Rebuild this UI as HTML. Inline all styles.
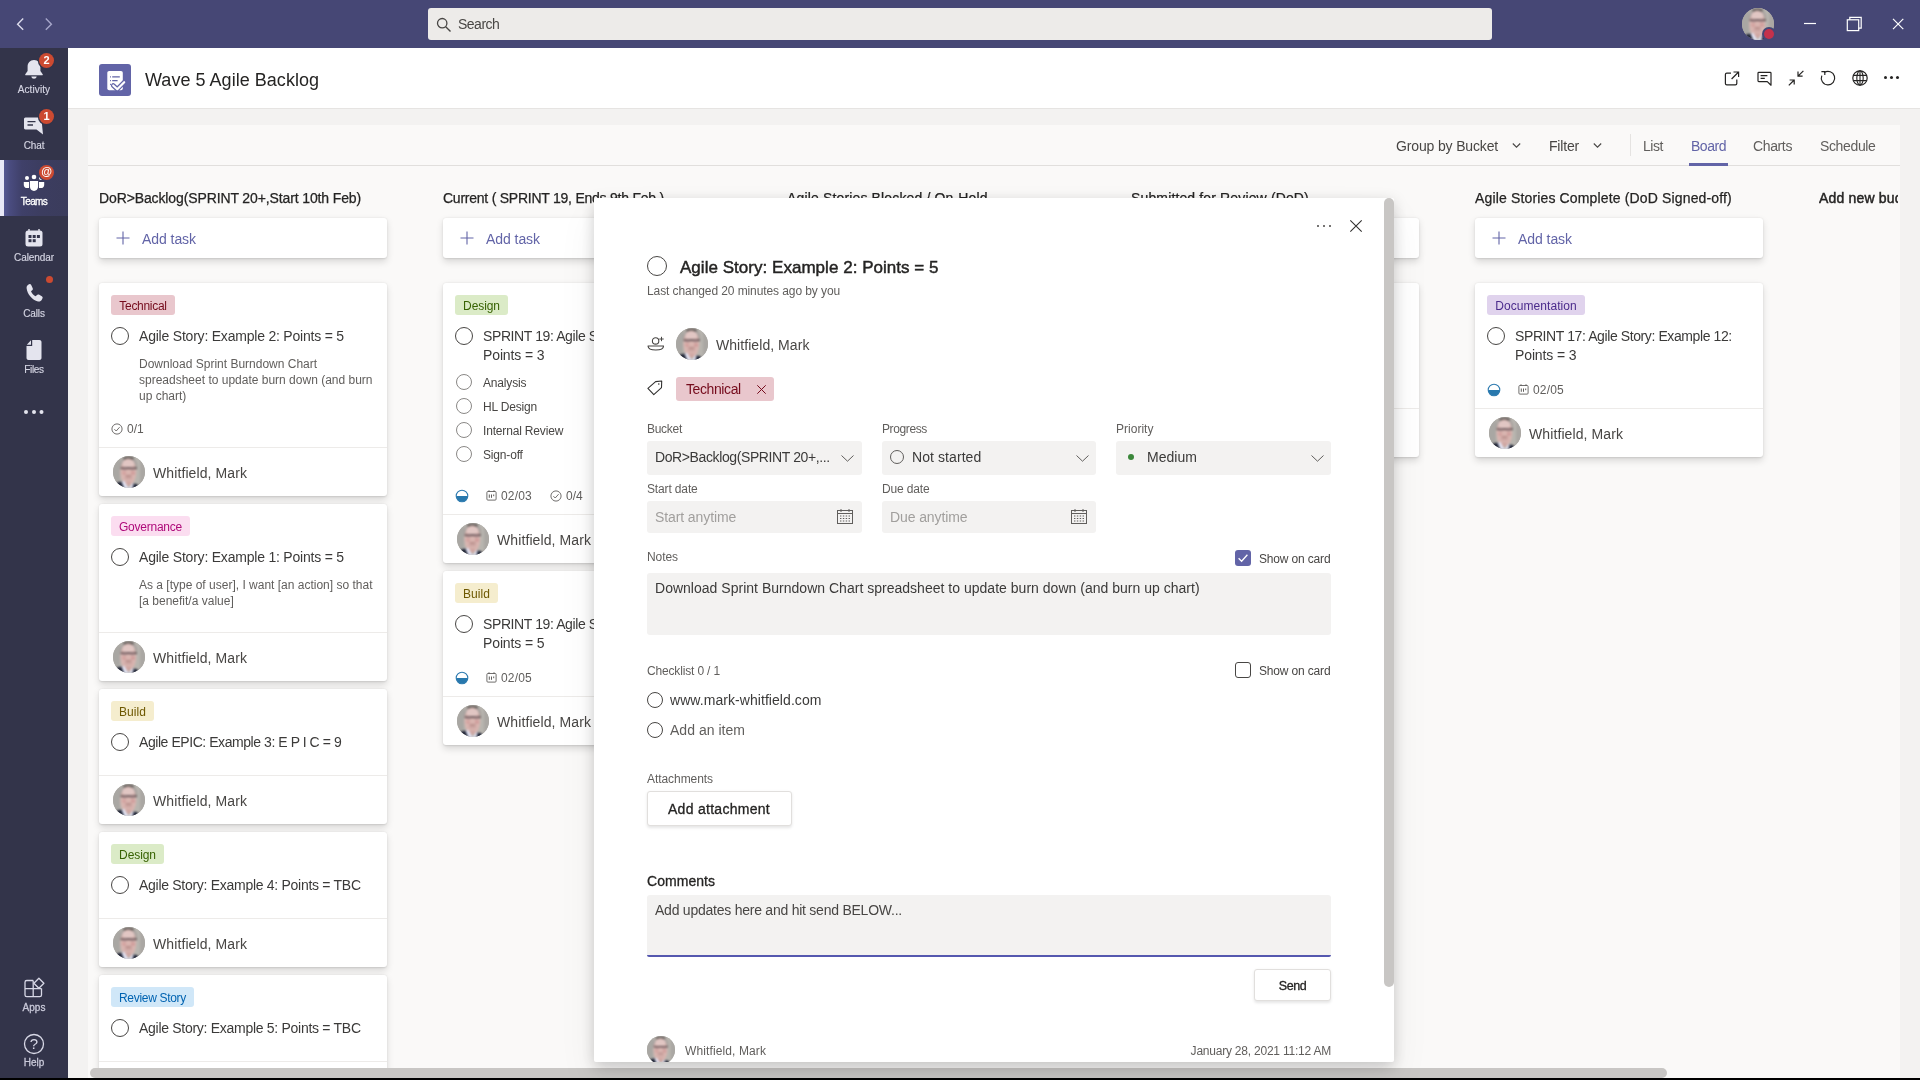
<!DOCTYPE html>
<html lang="en">
<head>
<meta charset="utf-8">
<title>Wave 5 Agile Backlog</title>
<style>
*{box-sizing:border-box;margin:0;padding:0}
html,body{width:1920px;height:1080px;overflow:hidden;background:#f3f2f1;font-family:"Liberation Sans",sans-serif;color:#252423}
body{position:relative}
#titlebar,#rail,#header,#panel,#modal{will-change:transform}
.abs{position:absolute}
svg{display:block;overflow:visible}
/* title bar */
#titlebar{position:absolute;left:0;top:0;width:1920px;height:48px;background:#464775}
#search{position:absolute;left:428px;top:8px;width:1064px;height:32px;background:#edebe9;border-radius:3px}
#search span{position:absolute;left:30px;letter-spacing:-0.500px;top:7px;font-size:14px;line-height:18px;color:#484644}
/* rail */
#rail{position:absolute;left:0;top:48px;width:68px;height:1032px;background:#33344a}
.ri{position:absolute;left:0;width:68px;height:56px}
.ri .lbl{position:absolute;left:0;width:68px;text-align:center;top:35px;font-size:10px;line-height:12px;color:#d6d6e4;letter-spacing:-0.100px;-webkit-text-stroke:0.150px #d6d6e4}
.ri svg{position:absolute;left:22px;top:8px}
.ri.act{background:linear-gradient(90deg,#5d60a0 0,#4a4c80 14%,#3f4069 32%,#3c3d60 60%,#3b3c5c 100%)}
.ri.act:before{content:"";position:absolute;left:0;top:0;width:4px;height:56px;background:#e8e8f7}
.ri.act .lbl{color:#fff}
.badge{position:absolute;left:39px;top:4px;width:16px;height:16px;border-radius:8px;background:#cc4a31;color:#fff;font-size:11px;font-weight:bold;line-height:16px;text-align:center}
/* header */
#header{position:absolute;left:68px;top:48px;width:1852px;height:61px;background:#fff;border-bottom:1px solid #e6e4e2}
#appicon{position:absolute;left:31px;top:16px;width:32px;height:32px;border-radius:3px;background:#6264a7}
#title{position:absolute;left:77px;top:20px;letter-spacing:0.030px;font-size:18px;line-height:24px;color:#252423;white-space:nowrap}
.hicon{position:absolute;top:22px}
/* panel */
#panel{position:absolute;left:88px;top:125px;width:1812px;height:953px;background:#faf9f8;overflow:hidden}
#toolbar{position:absolute;left:0;top:0;width:1812px;height:41px;border-bottom:1px solid #e1dfdd}
.tb{position:absolute;top:11px;font-size:14px;line-height:20px;color:#484644;white-space:nowrap}

.av{position:absolute;width:32px;height:32px;border-radius:50%;overflow:hidden;background:#b3b0ab}
.av svg{width:100%;height:100%;filter:blur(0.800px)}
.av.s28{width:28px;height:28px}

/* board */
.colh{position:absolute;top:63px;font-size:14px;line-height:20px;color:#252423;white-space:nowrap;-webkit-text-stroke:0.25px #252423}
.card{position:absolute;width:288px;background:#fff;border-radius:3px;box-shadow:0 3.200px 7.200px rgba(0,0,0,.13),0 .6px 1.800px rgba(0,0,0,.1)}
.addtask{height:40px;top:93px}
.addtask span{position:absolute;left:43px;top:11px;font-size:14px;letter-spacing:-0.060px;line-height:20px;color:#6264a7}
.addtask svg{position:absolute;left:17px;top:13px}
.tag{position:absolute;left:12px;top:12px;height:20px;border-radius:3px;font-size:12px;line-height:22.500px;padding:0;text-align:center;white-space:nowrap;overflow:hidden}
.t-tech{background:#e9c7cd;color:#750b1c}
.t-gov{background:#fbddf0;color:#af0a7a}
.t-build{background:#f5edce;color:#6d5700}
.t-design{background:#dbebc7;color:#386304}
.t-review{background:#d0e7f8;color:#0063b1}
.t-doc{background:#e0d3ed;color:#4b2b8c}
.circ{position:absolute;border:1.300px solid #484644;border-radius:50%;background:#fff}
.c17{width:18px;height:18px;left:12px}
.ttl{position:absolute;left:40px;font-size:14px;line-height:19px;color:#3b3a39;margin-top:1px;white-space:nowrap}
.desc{position:absolute;left:40px;font-size:12px;line-height:16px;color:#605e5c;white-space:nowrap}
.divd{position:absolute;left:0;width:288px;height:1px;background:#edebe9}
.nm{position:absolute;left:54px;font-size:14px;letter-spacing:0.100px;line-height:20px;color:#484644;white-space:nowrap}
.meta{position:absolute;font-size:12px;line-height:16px;color:#605e5c;white-space:nowrap}
.chk{position:absolute;left:40px;font-size:12px;line-height:16px;color:#484644;white-space:nowrap;letter-spacing:-0.170px;margin-top:1px}
.c15{width:16px;height:16px;left:13px;border-color:#8a8886;border-width:1.200px}
#blackbar{position:absolute;left:0;top:1078px;width:1920px;height:2px;background:#000}
/* modal */
#modal{position:absolute;left:594px;top:198px;width:800px;height:864px;background:#fff;border-radius:2px;box-shadow:0 4.800px 14.400px rgba(0,0,0,.18),0 18px 40px rgba(0,0,0,.06);z-index:10}
#minner{position:absolute;left:0;top:0;width:800px;height:864px;overflow:hidden;border-radius:2px}
.m{position:absolute;white-space:nowrap}
.l12{font-size:12px;line-height:16px;color:#605e5c}
.t14{font-size:14px;line-height:20px;color:#3b3a39}
.fld{position:absolute;background:#f3f2f1;border-radius:3px}
.sb{-webkit-text-stroke:0.300px currentColor}
</style>
</head>
<body>
<div id="titlebar">
  <svg class="abs" style="left:15px;top:17px" width="10" height="14" viewBox="0 0 10 14"><path d="M8.200 1.600 L2.600 7.200 L8.200 12.800" fill="none" stroke="#dcdcec" stroke-width="1.400"/></svg>
  <svg class="abs" style="left:44px;top:17px" width="10" height="14" viewBox="0 0 10 14"><path d="M1.800 1.600 L7.400 7.200 L1.800 12.800" fill="none" stroke="#a7a7ca" stroke-width="1.400"/></svg>
  <div id="search">
    <svg class="abs" style="left:8px;top:9px" width="16" height="16" viewBox="0 0 16 16"><circle cx="6.2" cy="6.2" r="4.7" fill="none" stroke="#484644" stroke-width="1.3"/><path d="M9.7 9.7 L14.5 14.5" stroke="#484644" stroke-width="1.4"/></svg>
    <span>Search</span>
  </div>

  <div class="av" style="left:1742px;top:8px"><svg viewBox="0 0 32 32"><g><rect x="-2" y="-2" width="36" height="36" fill="#b8b5af"/><rect x="-2" y="-2" width="9" height="36" fill="#a9a7a3"/><rect x="27" y="-2" width="7" height="36" fill="#aaa7a3"/><ellipse cx="15.500" cy="9.500" rx="8.800" ry="9" fill="#a59f9c"/><ellipse cx="15.500" cy="2.200" rx="5.500" ry="1.600" fill="#5f5856"/><ellipse cx="15.300" cy="16" rx="8" ry="13.400" fill="#d9b5b0"/><ellipse cx="15.300" cy="7.500" rx="6.200" ry="4.300" fill="#e1c6c3"/><ellipse cx="11.200" cy="17" rx="2.200" ry="2" fill="#d3a3a0"/><ellipse cx="19.900" cy="17" rx="2.200" ry="2" fill="#d09d9b"/><rect x="7.600" y="11.600" width="16.400" height="1.200" rx="0.500" fill="#33272c"/><ellipse cx="11.500" cy="13" rx="2.600" ry="1" fill="#947a7c"/><ellipse cx="19.600" cy="13" rx="2.600" ry="1" fill="#947a7c"/><ellipse cx="15.500" cy="19.900" rx="3.400" ry="0.800" fill="#b58a87"/><ellipse cx="15.500" cy="22.300" rx="4" ry="1.200" fill="#cba4a0"/><path d="M8.400 25.800 L11.500 25 L14.800 31.500 L16.600 31.500 L19.600 27 L20.800 28 L20 33 L10 33 Z" fill="#e3e5f6"/><path d="M11.800 25.500 L19 25.500 L15.600 30.500 Z" fill="#cfa6a1"/><path d="M3 27 L8.400 25.400 L11.500 33 L3 33 Z" fill="#1c2133"/><path d="M20.600 27.600 L24.800 28.400 L26 33 L19.400 33 Z" fill="#1c2133"/></g></svg></div>
  <div class="abs" style="left:1762px;top:27px;width:14px;height:14px;border-radius:7px;background:#464775"></div>
  <div class="abs" style="left:1764px;top:29px;width:10px;height:10px;border-radius:5px;background:#c4314b"></div>
  <svg class="abs" style="left:1800px;top:12px" width="24" height="24" viewBox="0 0 24 24"><path d="M4 11.500 H16" stroke="#fff" stroke-width="1.200"/></svg>
  <svg class="abs" style="left:1842px;top:12px" width="24" height="24" viewBox="0 0 24 24"><rect x="5.300" y="7.800" width="11.400" height="10.800" fill="none" stroke="#fff" stroke-width="1.200"/><path d="M7.800 7.800 V5.300 H19.200 V16.100 H16.700" fill="none" stroke="#fff" stroke-width="1.200"/></svg>
  <svg class="abs" style="left:1886px;top:12px" width="24" height="24" viewBox="0 0 24 24"><path d="M7 6.800 L17.300 17.100 M17.300 6.800 L7 17.100" stroke="#fff" stroke-width="1.200"/></svg>
</div>
<div id="rail">
  <div class="ri" style="top:0">
    <svg width="24" height="24" viewBox="0 0 24 24" style="left:22px;top:10px"><path d="M12 2 C8 2 5.6 5 5.6 8.6 V13 L3.3 16.2 C3 16.8 3.3 17.3 4 17.3 H20 C20.7 17.3 21 16.8 20.7 16.2 L18.4 13 V8.6 C18.4 5 16 2 12 2 Z" fill="#e4e4ee"/><path d="M9.3 18.6 H14.7 C14.4 20 13.3 20.8 12 20.8 C10.7 20.8 9.6 20 9.3 18.6 Z" fill="#e4e4ee"/></svg>
    <div class="badge" style="left:39px;top:4.500px;width:15px;height:15px;border-radius:8px;line-height:15px;box-shadow:0 0 0 1.200px #33344a">2</div>
    <div class="lbl" style="top:36px;letter-spacing:0.100px">Activity</div>
  </div>
  <div class="ri" style="top:56px">
    <svg width="24" height="24" viewBox="0 0 24 24" style="left:22px;top:11px"><path d="M3.5 2.5 H17.5 C18.6 2.5 19.5 3.4 19.5 4.5 L21 19.5 L14.5 14.5 H3.5 C2.4 14.5 2 13.8 2 12.8 V4.3 C2 3.3 2.6 2.5 3.5 2.5 Z" fill="#e4e4ee"/><path d="M5.5 6.6 H13.5 M5.5 10 H11" stroke="#33344a" stroke-width="1.3"/></svg>
    <div class="badge" style="left:39px;top:4.500px;width:15px;height:15px;border-radius:8px;line-height:15px;box-shadow:0 0 0 1.200px #33344a">1</div>
    <div class="lbl" style="top:36px">Chat</div>
  </div>
  <div class="ri act" style="top:112px">
    <svg width="24" height="20" viewBox="0 0 24 20" style="left:22px;top:14px"><circle cx="5" cy="4" r="2" fill="#fff"/><circle cx="12" cy="3" r="2.300" fill="#fff"/><circle cx="19" cy="4" r="2" fill="#fff"/><path d="M1.800 7.900 H7 V14.100 H5 C3.200 14.100 1.800 12.700 1.800 10.900 Z" fill="#fff"/><path d="M7.900 6.900 H16.100 V12.800 C16.100 15.100 14.300 16.900 12 16.900 C9.700 16.900 7.900 15.100 7.900 12.800 Z" fill="#fff"/><path d="M17 7.900 H22.200 V10.900 C22.200 12.700 20.800 14.100 19 14.100 H17 Z" fill="#fff"/></svg>
    <div class="badge" style="left:39px;top:4.500px;width:15px;height:15px;border-radius:8px;line-height:13.500px;font-size:11px;box-shadow:0 0 0 1.200px #3d3e64">@</div>
    <div class="lbl" style="top:35.500px;-webkit-text-stroke:0.300px #fff;letter-spacing:-0.600px">Teams</div>
  </div>
  <div class="ri" style="top:168px">
    <svg width="20" height="20" viewBox="0 0 20 20" style="left:24px;top:12px"><path d="M5 1 V3 M15 1 V3" stroke="#e4e4ee" stroke-width="1.4"/><rect x="1.5" y="2.5" width="17" height="16" rx="2.5" fill="#e4e4ee"/><rect x="4.5" y="7" width="3" height="3" fill="#33344a"/><rect x="8.7" y="7" width="3" height="3" fill="#33344a"/><rect x="12.9" y="7" width="3" height="3" fill="#33344a"/><rect x="4.5" y="11.2" width="3" height="3" fill="#33344a"/><rect x="8.7" y="11.2" width="3" height="3" fill="#33344a"/></svg>
    <div class="lbl" style="top:36px">Calendar</div>
  </div>
  <div class="ri" style="top:224px">
    <svg width="20" height="20" viewBox="0 0 20 20" style="left:24px;top:11px"><path d="M5.2 1.2 C6 0.9 6.8 1.2 7.2 2 L8.7 5.2 C9 6 8.8 6.8 8.2 7.3 L7 8.3 C7.8 10.4 9.6 12.4 11.8 13.3 L12.9 12 C13.4 11.4 14.2 11.2 14.9 11.6 L17.8 13.2 C18.6 13.7 18.9 14.5 18.5 15.3 L17.8 16.8 C17.1 18.2 15.6 18.9 14 18.5 C8.3 17 3.3 11.2 2.6 5.2 C2.4 3.6 3.2 2.3 4.5 1.6 Z" fill="#e4e4ee"/></svg>
    <div class="abs" style="left:46px;top:4px;width:7px;height:7px;border-radius:4px;background:#cc4a31"></div>
    <div class="lbl" style="top:36px">Calls</div>
  </div>
  <div class="ri" style="top:280px">
    <svg width="20" height="22" viewBox="0 0 20 22" style="left:24px;top:11px"><path d="M8.2 1 H15.5 C16.6 1 17.5 1.9 17.5 3 V19 C17.5 20.1 16.6 21 15.5 21 H4.5 C3.4 21 2.5 20.1 2.5 19 V7 H8.2 Z M7 1.3 V5.8 H2.8 Z" fill="#e4e4ee"/></svg>
    <div class="lbl" style="top:36px;letter-spacing:-0.300px">Files</div>
  </div>
  <div class="abs" style="left:24px;top:362px;width:4px;height:4px;border-radius:2px;background:#e4e4ee;box-shadow:8px 0 0 #e4e4ee,15.5px 0 0 #e4e4ee"></div>
  <div class="ri" style="top:921px">
    <svg width="22" height="22" viewBox="0 0 22 22" style="left:23px;top:7px"><path d="M10.200 4.500 H3.800 C2.800 4.500 2 5.300 2 6.300 V18.900 C2 19.900 2.800 20.700 3.800 20.700 H16.700 C17.700 20.700 18.500 19.900 18.500 18.900 V12.600 M2 12.600 H18.500 M10.200 4.500 V20.700" fill="none" stroke="#d8d8e6" stroke-width="1.300"/><path d="M15.900 2.300 L20.900 7.300 L15.900 12.300 L10.900 7.300 Z" fill="none" stroke="#d8d8e6" stroke-width="1.300" stroke-linejoin="round"/></svg>
    <div class="lbl" style="top:33px;-webkit-text-stroke:0.300px #c8c8d8;color:#c8c8d8;letter-spacing:0">Apps</div>
  </div>
  <div class="ri" style="top:976px">
    <svg width="22" height="22" viewBox="0 0 22 22" style="left:23px;top:9px"><circle cx="11" cy="11" r="9.500" fill="none" stroke="#d8d8e6" stroke-width="1.3"/></svg>
    <div class="abs" style="left:23px;top:10px;width:22px;text-align:center;font-size:15px;line-height:20px;color:#d8d8e6">?</div>
    <div class="lbl" style="top:33px;-webkit-text-stroke:0.300px #c8c8d8;color:#c8c8d8;letter-spacing:0">Help</div>
  </div>
</div>
<div id="header">
  <div id="appicon"><svg width="32" height="32" viewBox="0 0 32 32"><rect x="8.300" y="7" width="15.500" height="19.200" rx="1.800" fill="#fff"/><path d="M11 12.800 H11.900 M13.200 12.800 H20.800 M11 16.600 H11.900 M13.200 16.600 H18.600 M11 20.400 H11.900" stroke="#6264a7" stroke-width="1.300"/><path d="M14.200 21.500 L18.300 25.200 L25.200 18.200" fill="none" stroke="#6264a7" stroke-width="4.600" stroke-linecap="round" stroke-linejoin="round"/><path d="M14.200 21.500 L18.300 25.200 L25.200 18.200" fill="none" stroke="#fff" stroke-width="2.200" stroke-linecap="round" stroke-linejoin="round"/></svg></div>
  <div id="title">Wave 5 Agile Backlog</div>
  <svg class="hicon" style="left:1655px" width="16" height="16" viewBox="0 0 16 16"><path d="M8 3.200 H3.800 C3 3.200 2.400 3.800 2.400 4.600 V13.400 C2.400 14.200 3 14.800 3.800 14.800 H12.400 C13.200 14.800 13.800 14.200 13.800 13.400 V9.500" fill="none" stroke="#252423" stroke-width="1.200"/><path d="M8.600 9 L15.600 2 M10.500 2 H15.600 V7" fill="none" stroke="#252423" stroke-width="1.200"/></svg>
  <svg class="hicon" style="left:1688px" width="16" height="16" viewBox="0 0 16 16"><path d="M2.800 2.400 H14.200 C14.600 2.400 15 2.800 15 3.200 V15.200 L11.300 11.600 H2.800 C2.400 11.600 2 11.200 2 10.800 V3.200 C2 2.800 2.400 2.400 2.800 2.400 Z" fill="none" stroke="#252423" stroke-width="1.200" stroke-linejoin="round"/><path d="M4.600 5.600 H11.400 M4.600 8.400 H8.800" stroke="#252423" stroke-width="1.200"/></svg>
  <svg class="hicon" style="left:1719px;top:21px" width="18" height="18" viewBox="0 0 18 18"><path d="M16.400 1.800 L11 7.200 M11 2.600 V7.200 H15.600 M1.800 16.400 L7.200 11 M2.600 11 H7.200 V15.600" fill="none" stroke="#252423" stroke-width="1.200"/></svg>
  <svg class="hicon" style="left:1751px;top:21px" width="18" height="18" viewBox="0 0 18 18"><path d="M5.200 3.600 A6.700 6.700 0 1 1 2.800 6.600" fill="none" stroke="#252423" stroke-width="1.200"/><path d="M2.400 2.600 H5.800 V6" fill="none" stroke="#252423" stroke-width="1.200"/></svg>
  <svg class="hicon" style="left:1783px;top:21px" width="18" height="18" viewBox="0 0 18 18"><circle cx="9" cy="9" r="7.200" fill="none" stroke="#252423" stroke-width="1.200"/><ellipse cx="9" cy="9" rx="3.200" ry="7.200" fill="none" stroke="#252423" stroke-width="1.100"/><path d="M9 1.800 V16.200 M2.400 6.400 H15.600 M2.400 11.600 H15.600" stroke="#252423" stroke-width="1.100"/></svg>
  <div class="abs" style="left:1816px;top:28px;width:3px;height:3px;border-radius:2px;background:#252423;box-shadow:6px 0 0 #252423,12px 0 0 #252423"></div>
</div>
<div id="panel">
  <div id="toolbar">
    <div class="tb" style="left:1308px;letter-spacing:-0.150px">Group by Bucket</div>
    <svg class="abs" style="left:1424px;top:17px" width="9" height="7" viewBox="0 0 9 7"><path d="M0.800 1.500 L4.500 5.200 L8.200 1.500" fill="none" stroke="#484644" stroke-width="1.100"/></svg>
    <div class="tb" style="left:1461px;letter-spacing:-0.180px">Filter</div>
    <svg class="abs" style="left:1505px;top:17px" width="9" height="7" viewBox="0 0 9 7"><path d="M0.800 1.500 L4.500 5.200 L8.200 1.500" fill="none" stroke="#484644" stroke-width="1.100"/></svg>
    <div class="abs" style="left:1542px;top:9px;width:1px;height:22px;background:#e5e3e1"></div>
    <div class="tb" style="left:1555px;color:#605e5c;letter-spacing:-0.450px">List</div>
    <div class="tb" style="left:1603px;color:#6264a7;letter-spacing:-0.470px">Board</div>
    <div class="abs" style="left:1601px;top:38px;width:39px;height:3px;background:#6264a7"></div>
    <div class="tb" style="left:1665px;color:#605e5c;letter-spacing:-0.370px">Charts</div>
    <div class="tb" style="left:1732px;color:#605e5c;letter-spacing:-0.360px">Schedule</div>
  </div>
  <div class="colh" style="left:11px;letter-spacing:-0.12px">DoR&gt;Backlog(SPRINT 20+,Start 10th Feb)</div>
  <div class="colh" style="left:355px;letter-spacing:-0.24px">Current ( SPRINT 19, Ends 9th Feb )</div>
  <div class="colh" style="left:699px;letter-spacing:0.15px">Agile Stories Blocked / On-Hold</div>
  <div class="colh" style="left:1043px;letter-spacing:0.14px">Submitted for Review (DoD)</div>
  <div class="colh" style="left:1387px;letter-spacing:0.15px">Agile Stories Complete (DoD Signed-off)</div>
  <div class="colh" style="left:1731px;width:79px;overflow:hidden;-webkit-text-stroke:0.450px #252423;letter-spacing:0.170px">Add new bucket</div>
  <div class="card addtask" style="left:11px"><svg width="14" height="14" viewBox="0 0 14 14"><path d="M7 0.500 V13.500 M0.500 7 H13.500" stroke="#6264a7" stroke-width="1.100"/></svg><span>Add task</span></div>
  <div class="card addtask" style="left:355px"><svg width="14" height="14" viewBox="0 0 14 14"><path d="M7 0.500 V13.500 M0.500 7 H13.500" stroke="#6264a7" stroke-width="1.100"/></svg><span>Add task</span></div>
  <div class="card addtask" style="left:699px"><svg width="14" height="14" viewBox="0 0 14 14"><path d="M7 0.500 V13.500 M0.500 7 H13.500" stroke="#6264a7" stroke-width="1.100"/></svg><span>Add task</span></div>
  <div class="card addtask" style="left:1043px"><svg width="14" height="14" viewBox="0 0 14 14"><path d="M7 0.500 V13.500 M0.500 7 H13.500" stroke="#6264a7" stroke-width="1.100"/></svg><span>Add task</span></div>
  <div class="card addtask" style="left:1387px"><svg width="14" height="14" viewBox="0 0 14 14"><path d="M7 0.500 V13.500 M0.500 7 H13.500" stroke="#6264a7" stroke-width="1.100"/></svg><span>Add task</span></div>
  <div class="card" style="left:11px;top:158px;height:213px"><div class="tag t-tech" style="width:64px;letter-spacing:-0.3px">Technical</div><div class="circ c17" style="top:44px"></div><div class="ttl" style="top:43px;letter-spacing:-0.21px">Agile Story: Example 2: Points = 5</div><div class="desc" style="top:73px">Download Sprint Burndown Chart<br>spreadsheet to update burn down (and burn<br>up chart)</div><div class="meta" style="left:12px;top:140px"><svg width="12" height="12" viewBox="0 0 12 12"><circle cx="6" cy="6" r="5.100" fill="none" stroke="#605e5c" stroke-width="0.900"/><path d="M3.400 6.200 L5.200 8 L8.600 4.200" fill="none" stroke="#605e5c" stroke-width="0.900"/></svg></div><div class="meta" style="left:28px;top:138px">0/1</div><div class="divd" style="top:164px"></div><div class="av" style="left:14px;top:173px"><svg viewBox="0 0 32 32"><g><rect x="-2" y="-2" width="36" height="36" fill="#b8b5af"/><rect x="-2" y="-2" width="9" height="36" fill="#a9a7a3"/><rect x="27" y="-2" width="7" height="36" fill="#aaa7a3"/><ellipse cx="15.500" cy="9.500" rx="8.800" ry="9" fill="#a59f9c"/><ellipse cx="15.500" cy="2.200" rx="5.500" ry="1.600" fill="#5f5856"/><ellipse cx="15.300" cy="16" rx="8" ry="13.400" fill="#d9b5b0"/><ellipse cx="15.300" cy="7.500" rx="6.200" ry="4.300" fill="#e1c6c3"/><ellipse cx="11.200" cy="17" rx="2.200" ry="2" fill="#d3a3a0"/><ellipse cx="19.900" cy="17" rx="2.200" ry="2" fill="#d09d9b"/><rect x="7.600" y="11.600" width="16.400" height="1.200" rx="0.500" fill="#33272c"/><ellipse cx="11.500" cy="13" rx="2.600" ry="1" fill="#947a7c"/><ellipse cx="19.600" cy="13" rx="2.600" ry="1" fill="#947a7c"/><ellipse cx="15.500" cy="19.900" rx="3.400" ry="0.800" fill="#b58a87"/><ellipse cx="15.500" cy="22.300" rx="4" ry="1.200" fill="#cba4a0"/><path d="M8.400 25.800 L11.500 25 L14.800 31.500 L16.600 31.500 L19.600 27 L20.800 28 L20 33 L10 33 Z" fill="#e3e5f6"/><path d="M11.800 25.500 L19 25.500 L15.600 30.500 Z" fill="#cfa6a1"/><path d="M3 27 L8.400 25.400 L11.500 33 L3 33 Z" fill="#1c2133"/><path d="M20.600 27.600 L24.800 28.400 L26 33 L19.400 33 Z" fill="#1c2133"/></g></svg></div><div class="nm" style="top:180px">Whitfield, Mark</div></div>
  <div class="card" style="left:11px;top:379px;height:177px"><div class="tag t-gov" style="width:79px;letter-spacing:-0.24px">Governance</div><div class="circ c17" style="top:44px"></div><div class="ttl" style="top:43px;letter-spacing:-0.21px">Agile Story: Example 1: Points = 5</div><div class="desc" style="top:73px">As a [type of user], I want [an action] so that<br>[a benefit/a value]</div><div class="divd" style="top:128px"></div><div class="av" style="left:14px;top:137px"><svg viewBox="0 0 32 32"><g><rect x="-2" y="-2" width="36" height="36" fill="#b8b5af"/><rect x="-2" y="-2" width="9" height="36" fill="#a9a7a3"/><rect x="27" y="-2" width="7" height="36" fill="#aaa7a3"/><ellipse cx="15.500" cy="9.500" rx="8.800" ry="9" fill="#a59f9c"/><ellipse cx="15.500" cy="2.200" rx="5.500" ry="1.600" fill="#5f5856"/><ellipse cx="15.300" cy="16" rx="8" ry="13.400" fill="#d9b5b0"/><ellipse cx="15.300" cy="7.500" rx="6.200" ry="4.300" fill="#e1c6c3"/><ellipse cx="11.200" cy="17" rx="2.200" ry="2" fill="#d3a3a0"/><ellipse cx="19.900" cy="17" rx="2.200" ry="2" fill="#d09d9b"/><rect x="7.600" y="11.600" width="16.400" height="1.200" rx="0.500" fill="#33272c"/><ellipse cx="11.500" cy="13" rx="2.600" ry="1" fill="#947a7c"/><ellipse cx="19.600" cy="13" rx="2.600" ry="1" fill="#947a7c"/><ellipse cx="15.500" cy="19.900" rx="3.400" ry="0.800" fill="#b58a87"/><ellipse cx="15.500" cy="22.300" rx="4" ry="1.200" fill="#cba4a0"/><path d="M8.400 25.800 L11.500 25 L14.800 31.500 L16.600 31.500 L19.600 27 L20.800 28 L20 33 L10 33 Z" fill="#e3e5f6"/><path d="M11.800 25.500 L19 25.500 L15.600 30.500 Z" fill="#cfa6a1"/><path d="M3 27 L8.400 25.400 L11.500 33 L3 33 Z" fill="#1c2133"/><path d="M20.600 27.600 L24.800 28.400 L26 33 L19.400 33 Z" fill="#1c2133"/></g></svg></div><div class="nm" style="top:144px">Whitfield, Mark</div></div>
  <div class="card" style="left:11px;top:564px;height:135px"><div class="tag t-build" style="width:43px;letter-spacing:0.05px">Build</div><div class="circ c17" style="top:44px"></div><div class="ttl" style="top:43px;letter-spacing:-0.44px">Agile EPIC: Example 3: E P I C = 9</div><div class="divd" style="top:86px"></div><div class="av" style="left:14px;top:95px"><svg viewBox="0 0 32 32"><g><rect x="-2" y="-2" width="36" height="36" fill="#b8b5af"/><rect x="-2" y="-2" width="9" height="36" fill="#a9a7a3"/><rect x="27" y="-2" width="7" height="36" fill="#aaa7a3"/><ellipse cx="15.500" cy="9.500" rx="8.800" ry="9" fill="#a59f9c"/><ellipse cx="15.500" cy="2.200" rx="5.500" ry="1.600" fill="#5f5856"/><ellipse cx="15.300" cy="16" rx="8" ry="13.400" fill="#d9b5b0"/><ellipse cx="15.300" cy="7.500" rx="6.200" ry="4.300" fill="#e1c6c3"/><ellipse cx="11.200" cy="17" rx="2.200" ry="2" fill="#d3a3a0"/><ellipse cx="19.900" cy="17" rx="2.200" ry="2" fill="#d09d9b"/><rect x="7.600" y="11.600" width="16.400" height="1.200" rx="0.500" fill="#33272c"/><ellipse cx="11.500" cy="13" rx="2.600" ry="1" fill="#947a7c"/><ellipse cx="19.600" cy="13" rx="2.600" ry="1" fill="#947a7c"/><ellipse cx="15.500" cy="19.900" rx="3.400" ry="0.800" fill="#b58a87"/><ellipse cx="15.500" cy="22.300" rx="4" ry="1.200" fill="#cba4a0"/><path d="M8.400 25.800 L11.500 25 L14.800 31.500 L16.600 31.500 L19.600 27 L20.800 28 L20 33 L10 33 Z" fill="#e3e5f6"/><path d="M11.800 25.500 L19 25.500 L15.600 30.500 Z" fill="#cfa6a1"/><path d="M3 27 L8.400 25.400 L11.500 33 L3 33 Z" fill="#1c2133"/><path d="M20.600 27.600 L24.800 28.400 L26 33 L19.400 33 Z" fill="#1c2133"/></g></svg></div><div class="nm" style="top:102px">Whitfield, Mark</div></div>
  <div class="card" style="left:11px;top:707px;height:135px"><div class="tag t-design" style="width:53px;letter-spacing:-0.1px">Design</div><div class="circ c17" style="top:44px"></div><div class="ttl" style="top:43px;letter-spacing:-0.285px">Agile Story: Example 4: Points = TBC</div><div class="divd" style="top:86px"></div><div class="av" style="left:14px;top:95px"><svg viewBox="0 0 32 32"><g><rect x="-2" y="-2" width="36" height="36" fill="#b8b5af"/><rect x="-2" y="-2" width="9" height="36" fill="#a9a7a3"/><rect x="27" y="-2" width="7" height="36" fill="#aaa7a3"/><ellipse cx="15.500" cy="9.500" rx="8.800" ry="9" fill="#a59f9c"/><ellipse cx="15.500" cy="2.200" rx="5.500" ry="1.600" fill="#5f5856"/><ellipse cx="15.300" cy="16" rx="8" ry="13.400" fill="#d9b5b0"/><ellipse cx="15.300" cy="7.500" rx="6.200" ry="4.300" fill="#e1c6c3"/><ellipse cx="11.200" cy="17" rx="2.200" ry="2" fill="#d3a3a0"/><ellipse cx="19.900" cy="17" rx="2.200" ry="2" fill="#d09d9b"/><rect x="7.600" y="11.600" width="16.400" height="1.200" rx="0.500" fill="#33272c"/><ellipse cx="11.500" cy="13" rx="2.600" ry="1" fill="#947a7c"/><ellipse cx="19.600" cy="13" rx="2.600" ry="1" fill="#947a7c"/><ellipse cx="15.500" cy="19.900" rx="3.400" ry="0.800" fill="#b58a87"/><ellipse cx="15.500" cy="22.300" rx="4" ry="1.200" fill="#cba4a0"/><path d="M8.400 25.800 L11.500 25 L14.800 31.500 L16.600 31.500 L19.600 27 L20.800 28 L20 33 L10 33 Z" fill="#e3e5f6"/><path d="M11.800 25.500 L19 25.500 L15.600 30.500 Z" fill="#cfa6a1"/><path d="M3 27 L8.400 25.400 L11.500 33 L3 33 Z" fill="#1c2133"/><path d="M20.600 27.600 L24.800 28.400 L26 33 L19.400 33 Z" fill="#1c2133"/></g></svg></div><div class="nm" style="top:102px">Whitfield, Mark</div></div>
  <div class="card" style="left:11px;top:850px;height:135px"><div class="tag t-review" style="width:83px;letter-spacing:-0.31px">Review Story</div><div class="circ c17" style="top:44px"></div><div class="ttl" style="top:43px;letter-spacing:-0.285px">Agile Story: Example 5: Points = TBC</div><div class="divd" style="top:86px"></div><div class="av" style="left:14px;top:95px"><svg viewBox="0 0 32 32"><g><rect x="-2" y="-2" width="36" height="36" fill="#b8b5af"/><rect x="-2" y="-2" width="9" height="36" fill="#a9a7a3"/><rect x="27" y="-2" width="7" height="36" fill="#aaa7a3"/><ellipse cx="15.500" cy="9.500" rx="8.800" ry="9" fill="#a59f9c"/><ellipse cx="15.500" cy="2.200" rx="5.500" ry="1.600" fill="#5f5856"/><ellipse cx="15.300" cy="16" rx="8" ry="13.400" fill="#d9b5b0"/><ellipse cx="15.300" cy="7.500" rx="6.200" ry="4.300" fill="#e1c6c3"/><ellipse cx="11.200" cy="17" rx="2.200" ry="2" fill="#d3a3a0"/><ellipse cx="19.900" cy="17" rx="2.200" ry="2" fill="#d09d9b"/><rect x="7.600" y="11.600" width="16.400" height="1.200" rx="0.500" fill="#33272c"/><ellipse cx="11.500" cy="13" rx="2.600" ry="1" fill="#947a7c"/><ellipse cx="19.600" cy="13" rx="2.600" ry="1" fill="#947a7c"/><ellipse cx="15.500" cy="19.900" rx="3.400" ry="0.800" fill="#b58a87"/><ellipse cx="15.500" cy="22.300" rx="4" ry="1.200" fill="#cba4a0"/><path d="M8.400 25.800 L11.500 25 L14.800 31.500 L16.600 31.500 L19.600 27 L20.800 28 L20 33 L10 33 Z" fill="#e3e5f6"/><path d="M11.800 25.500 L19 25.500 L15.600 30.500 Z" fill="#cfa6a1"/><path d="M3 27 L8.400 25.400 L11.500 33 L3 33 Z" fill="#1c2133"/><path d="M20.600 27.600 L24.800 28.400 L26 33 L19.400 33 Z" fill="#1c2133"/></g></svg></div><div class="nm" style="top:102px">Whitfield, Mark</div></div>
  <div class="card" style="left:355px;top:158px;height:280px"><div class="tag t-design" style="width:53px;letter-spacing:-0.1px">Design</div><div class="circ c17" style="top:44px"></div><div class="ttl" style="top:43px;letter-spacing:-0.4px">SPRINT 19: Agile Story: Example 10:</div><div class="ttl" style="top:62px;letter-spacing:-0.12px">Points = 3</div><div class="circ c15" style="top:91px"></div><div class="chk" style="top:91px">Analysis</div><div class="circ c15" style="top:115px"></div><div class="chk" style="top:115px">HL Design</div><div class="circ c15" style="top:139px"></div><div class="chk" style="top:139px">Internal Review</div><div class="circ c15" style="top:163px"></div><div class="chk" style="top:163px">Sign-off</div><div class="meta" style="left:12px;top:206px"><svg width="14" height="14" viewBox="0 0 14 14"><circle cx="7" cy="7" r="5.800" fill="#fff" stroke="#2e7bb0" stroke-width="1.100"/><path d="M1.200 7 A5.800 5.800 0 0 0 12.800 7 Z" fill="#2878ad"/></svg></div><div class="meta" style="left:43px;top:207px"><svg width="11" height="11" viewBox="0 0 11 11"><rect x="0.900" y="1.500" width="9.200" height="8.600" rx="1" fill="none" stroke="#605e5c" stroke-width="0.900"/><path d="M3 0.300 V2 M8 0.300 V2 M3.300 4.500 V7.800 M5.500 4.500 V7.800 M7.700 4.500 V6.200" stroke="#605e5c" stroke-width="1"/></svg></div><div class="meta" style="left:58px;top:205px;letter-spacing:0.15px">02/03</div><div class="meta" style="left:107px;top:207px"><svg width="12" height="12" viewBox="0 0 12 12"><circle cx="6" cy="6" r="5.100" fill="none" stroke="#605e5c" stroke-width="0.900"/><path d="M3.400 6.200 L5.200 8 L8.600 4.200" fill="none" stroke="#605e5c" stroke-width="0.900"/></svg></div><div class="meta" style="left:123px;top:205px">0/4</div><div class="divd" style="top:231px"></div><div class="av" style="left:14px;top:240px"><svg viewBox="0 0 32 32"><g><rect x="-2" y="-2" width="36" height="36" fill="#b8b5af"/><rect x="-2" y="-2" width="9" height="36" fill="#a9a7a3"/><rect x="27" y="-2" width="7" height="36" fill="#aaa7a3"/><ellipse cx="15.500" cy="9.500" rx="8.800" ry="9" fill="#a59f9c"/><ellipse cx="15.500" cy="2.200" rx="5.500" ry="1.600" fill="#5f5856"/><ellipse cx="15.300" cy="16" rx="8" ry="13.400" fill="#d9b5b0"/><ellipse cx="15.300" cy="7.500" rx="6.200" ry="4.300" fill="#e1c6c3"/><ellipse cx="11.200" cy="17" rx="2.200" ry="2" fill="#d3a3a0"/><ellipse cx="19.900" cy="17" rx="2.200" ry="2" fill="#d09d9b"/><rect x="7.600" y="11.600" width="16.400" height="1.200" rx="0.500" fill="#33272c"/><ellipse cx="11.500" cy="13" rx="2.600" ry="1" fill="#947a7c"/><ellipse cx="19.600" cy="13" rx="2.600" ry="1" fill="#947a7c"/><ellipse cx="15.500" cy="19.900" rx="3.400" ry="0.800" fill="#b58a87"/><ellipse cx="15.500" cy="22.300" rx="4" ry="1.200" fill="#cba4a0"/><path d="M8.400 25.800 L11.500 25 L14.800 31.500 L16.600 31.500 L19.600 27 L20.800 28 L20 33 L10 33 Z" fill="#e3e5f6"/><path d="M11.800 25.500 L19 25.500 L15.600 30.500 Z" fill="#cfa6a1"/><path d="M3 27 L8.400 25.400 L11.500 33 L3 33 Z" fill="#1c2133"/><path d="M20.600 27.600 L24.800 28.400 L26 33 L19.400 33 Z" fill="#1c2133"/></g></svg></div><div class="nm" style="top:247px">Whitfield, Mark</div></div>
  <div class="card" style="left:355px;top:446px;height:174px"><div class="tag t-build" style="width:43px;letter-spacing:0.05px">Build</div><div class="circ c17" style="top:44px"></div><div class="ttl" style="top:43px;letter-spacing:-0.4px">SPRINT 19: Agile Story: Example 11:</div><div class="ttl" style="top:62px;letter-spacing:-0.12px">Points = 5</div><div class="meta" style="left:12px;top:100px"><svg width="14" height="14" viewBox="0 0 14 14"><circle cx="7" cy="7" r="5.800" fill="#fff" stroke="#2e7bb0" stroke-width="1.100"/><path d="M1.200 7 A5.800 5.800 0 0 0 12.800 7 Z" fill="#2878ad"/></svg></div><div class="meta" style="left:43px;top:101px"><svg width="11" height="11" viewBox="0 0 11 11"><rect x="0.900" y="1.500" width="9.200" height="8.600" rx="1" fill="none" stroke="#605e5c" stroke-width="0.900"/><path d="M3 0.300 V2 M8 0.300 V2 M3.300 4.500 V7.800 M5.500 4.500 V7.800 M7.700 4.500 V6.200" stroke="#605e5c" stroke-width="1"/></svg></div><div class="meta" style="left:58px;top:99px;letter-spacing:0.15px">02/05</div><div class="divd" style="top:125px"></div><div class="av" style="left:14px;top:134px"><svg viewBox="0 0 32 32"><g><rect x="-2" y="-2" width="36" height="36" fill="#b8b5af"/><rect x="-2" y="-2" width="9" height="36" fill="#a9a7a3"/><rect x="27" y="-2" width="7" height="36" fill="#aaa7a3"/><ellipse cx="15.500" cy="9.500" rx="8.800" ry="9" fill="#a59f9c"/><ellipse cx="15.500" cy="2.200" rx="5.500" ry="1.600" fill="#5f5856"/><ellipse cx="15.300" cy="16" rx="8" ry="13.400" fill="#d9b5b0"/><ellipse cx="15.300" cy="7.500" rx="6.200" ry="4.300" fill="#e1c6c3"/><ellipse cx="11.200" cy="17" rx="2.200" ry="2" fill="#d3a3a0"/><ellipse cx="19.900" cy="17" rx="2.200" ry="2" fill="#d09d9b"/><rect x="7.600" y="11.600" width="16.400" height="1.200" rx="0.500" fill="#33272c"/><ellipse cx="11.500" cy="13" rx="2.600" ry="1" fill="#947a7c"/><ellipse cx="19.600" cy="13" rx="2.600" ry="1" fill="#947a7c"/><ellipse cx="15.500" cy="19.900" rx="3.400" ry="0.800" fill="#b58a87"/><ellipse cx="15.500" cy="22.300" rx="4" ry="1.200" fill="#cba4a0"/><path d="M8.400 25.800 L11.500 25 L14.800 31.500 L16.600 31.500 L19.600 27 L20.800 28 L20 33 L10 33 Z" fill="#e3e5f6"/><path d="M11.800 25.500 L19 25.500 L15.600 30.500 Z" fill="#cfa6a1"/><path d="M3 27 L8.400 25.400 L11.500 33 L3 33 Z" fill="#1c2133"/><path d="M20.600 27.600 L24.800 28.400 L26 33 L19.400 33 Z" fill="#1c2133"/></g></svg></div><div class="nm" style="top:141px">Whitfield, Mark</div></div>
  <div class="card" style="left:1043px;top:158px;height:174px"><div class="divd" style="top:125px"></div></div>
  <div class="card" style="left:1387px;top:158px;height:174px"><div class="tag t-doc" style="width:98px;letter-spacing:0.07px">Documentation</div><div class="circ c17" style="top:44px"></div><div class="ttl" style="top:43px;letter-spacing:-0.4px">SPRINT 17: Agile Story: Example 12:</div><div class="ttl" style="top:62px;letter-spacing:-0.12px">Points = 3</div><div class="meta" style="left:12px;top:100px"><svg width="14" height="14" viewBox="0 0 14 14"><circle cx="7" cy="7" r="5.800" fill="#fff" stroke="#2e7bb0" stroke-width="1.100"/><path d="M1.200 7 A5.800 5.800 0 0 0 12.800 7 Z" fill="#2878ad"/></svg></div><div class="meta" style="left:43px;top:101px"><svg width="11" height="11" viewBox="0 0 11 11"><rect x="0.900" y="1.500" width="9.200" height="8.600" rx="1" fill="none" stroke="#605e5c" stroke-width="0.900"/><path d="M3 0.300 V2 M8 0.300 V2 M3.300 4.500 V7.800 M5.500 4.500 V7.800 M7.700 4.500 V6.200" stroke="#605e5c" stroke-width="1"/></svg></div><div class="meta" style="left:58px;top:99px;letter-spacing:0.15px">02/05</div><div class="divd" style="top:125px"></div><div class="av" style="left:14px;top:134px"><svg viewBox="0 0 32 32"><g><rect x="-2" y="-2" width="36" height="36" fill="#b8b5af"/><rect x="-2" y="-2" width="9" height="36" fill="#a9a7a3"/><rect x="27" y="-2" width="7" height="36" fill="#aaa7a3"/><ellipse cx="15.500" cy="9.500" rx="8.800" ry="9" fill="#a59f9c"/><ellipse cx="15.500" cy="2.200" rx="5.500" ry="1.600" fill="#5f5856"/><ellipse cx="15.300" cy="16" rx="8" ry="13.400" fill="#d9b5b0"/><ellipse cx="15.300" cy="7.500" rx="6.200" ry="4.300" fill="#e1c6c3"/><ellipse cx="11.200" cy="17" rx="2.200" ry="2" fill="#d3a3a0"/><ellipse cx="19.900" cy="17" rx="2.200" ry="2" fill="#d09d9b"/><rect x="7.600" y="11.600" width="16.400" height="1.200" rx="0.500" fill="#33272c"/><ellipse cx="11.500" cy="13" rx="2.600" ry="1" fill="#947a7c"/><ellipse cx="19.600" cy="13" rx="2.600" ry="1" fill="#947a7c"/><ellipse cx="15.500" cy="19.900" rx="3.400" ry="0.800" fill="#b58a87"/><ellipse cx="15.500" cy="22.300" rx="4" ry="1.200" fill="#cba4a0"/><path d="M8.400 25.800 L11.500 25 L14.800 31.500 L16.600 31.500 L19.600 27 L20.800 28 L20 33 L10 33 Z" fill="#e3e5f6"/><path d="M11.800 25.500 L19 25.500 L15.600 30.500 Z" fill="#cfa6a1"/><path d="M3 27 L8.400 25.400 L11.500 33 L3 33 Z" fill="#1c2133"/><path d="M20.600 27.600 L24.800 28.400 L26 33 L19.400 33 Z" fill="#1c2133"/></g></svg></div><div class="nm" style="top:141px">Whitfield, Mark</div></div>
  <div class="abs" style="left:0;top:943px;width:1812px;height:10px;background:#faf9f8;z-index:3"></div>
  <div class="abs" style="left:2px;top:943px;width:1577px;height:10px;border-radius:5px;background:#c8c6c4;z-index:4"></div>
</div>
<div id="modal"><div id="minner">
  <div class="abs" style="left:723px;top:27px;width:2px;height:2px;border-radius:1px;background:#484644;box-shadow:6px 0 0 #484644,12px 0 0 #484644"></div>
  <svg class="abs" style="left:756px;top:22px" width="12" height="12" viewBox="0 0 12 12"><path d="M0.300 0.300 L11.700 11.700 M11.700 0.300 L0.300 11.700" stroke="#323130" stroke-width="1.100"/></svg>
  <div class="circ" style="left:53px;top:58px;width:20px;height:20px;border-color:#484644;border-width:1.400px"></div>
  <div class="m" style="left:86px;top:58px;font-size:17px;line-height:24px;color:#252423;letter-spacing:0.030px;-webkit-text-stroke:0.450px #252423">Agile Story: Example 2: Points = 5</div>
  <div class="m l12" style="left:53px;top:85px;letter-spacing:-0.090px">Last changed 20 minutes ago by you</div>
  <svg class="abs" style="left:53px;top:137px" width="18" height="16" viewBox="0 0 18 16"><circle cx="8.600" cy="5.900" r="3.200" fill="none" stroke="#484644" stroke-width="1.100"/><path d="M14.500 1.800 V6.200 M12.300 4 H16.700" stroke="#484644" stroke-width="1"/><path d="M1 11 H16.600 C16.300 16.400 1.300 16.400 1 11 Z" fill="none" stroke="#484644" stroke-width="1.100" stroke-linejoin="round"/></svg>
  <div class="av" style="left:82px;top:130px"><svg viewBox="0 0 32 32"><g><rect x="-2" y="-2" width="36" height="36" fill="#b8b5af"/><rect x="-2" y="-2" width="9" height="36" fill="#a9a7a3"/><rect x="27" y="-2" width="7" height="36" fill="#aaa7a3"/><ellipse cx="15.500" cy="9.500" rx="8.800" ry="9" fill="#a59f9c"/><ellipse cx="15.500" cy="2.200" rx="5.500" ry="1.600" fill="#5f5856"/><ellipse cx="15.300" cy="16" rx="8" ry="13.400" fill="#d9b5b0"/><ellipse cx="15.300" cy="7.500" rx="6.200" ry="4.300" fill="#e1c6c3"/><ellipse cx="11.200" cy="17" rx="2.200" ry="2" fill="#d3a3a0"/><ellipse cx="19.900" cy="17" rx="2.200" ry="2" fill="#d09d9b"/><rect x="7.600" y="11.600" width="16.400" height="1.200" rx="0.500" fill="#33272c"/><ellipse cx="11.500" cy="13" rx="2.600" ry="1" fill="#947a7c"/><ellipse cx="19.600" cy="13" rx="2.600" ry="1" fill="#947a7c"/><ellipse cx="15.500" cy="19.900" rx="3.400" ry="0.800" fill="#b58a87"/><ellipse cx="15.500" cy="22.300" rx="4" ry="1.200" fill="#cba4a0"/><path d="M8.400 25.800 L11.500 25 L14.800 31.500 L16.600 31.500 L19.600 27 L20.800 28 L20 33 L10 33 Z" fill="#e3e5f6"/><path d="M11.800 25.500 L19 25.500 L15.600 30.500 Z" fill="#cfa6a1"/><path d="M3 27 L8.400 25.400 L11.500 33 L3 33 Z" fill="#1c2133"/><path d="M20.600 27.600 L24.800 28.400 L26 33 L19.400 33 Z" fill="#1c2133"/></g></svg></div>
  <div class="m t14" style="left:122px;top:137px;color:#484644;letter-spacing:0.060px">Whitfield, Mark</div>
  <svg class="abs" style="left:53px;top:182px" width="16" height="16" viewBox="0 0 16 16"><path d="M0.900 8.300 L8.600 1.600 L14.700 1 L14.500 7.600 L6.800 14.600 Z" fill="none" stroke="#323130" stroke-width="1.100" stroke-linejoin="round"/><circle cx="11.800" cy="4" r="0.800" fill="#323130"/></svg>
  <div class="abs" style="left:82px;top:179px;width:98px;height:24px;border-radius:3px;background:#e9c7cd"></div>
  <div class="m t14" style="left:92px;top:181px;color:#750b1c;letter-spacing:-0.400px">Technical</div>
  <svg class="abs" style="left:163px;top:187px" width="9" height="9" viewBox="0 0 9 9"><path d="M0.300 0.300 L8.700 8.700 M8.700 0.300 L0.300 8.700" stroke="#750b1c" stroke-width="1"/></svg>

  <div class="m l12" style="left:53px;top:223px;letter-spacing:-0.280px">Bucket</div>
  <div class="m l12" style="left:288px;top:223px;letter-spacing:-0.380px">Progress</div>
  <div class="m l12" style="left:522px;top:223px;letter-spacing:0.020px">Priority</div>
  <div class="fld" style="left:53px;top:243px;width:215px;height:34px"></div>
  <div class="fld" style="left:288px;top:243px;width:214px;height:34px"></div>
  <div class="fld" style="left:522px;top:243px;width:215px;height:34px"></div>
  <div class="m t14" style="left:61px;top:249px;letter-spacing:-0.390px">DoR&gt;Backlog(SPRINT 20+,...</div>
  <svg class="abs" style="left:247px;top:257px" width="13" height="7" viewBox="0 0 13 7"><path d="M0.500 0.500 L6.500 6.200 L12.500 0.500" fill="none" stroke="#605e5c" stroke-width="1"/></svg>
  <div class="circ" style="left:296px;top:252px;width:14px;height:14px;border-color:#605e5c;border-width:1.100px;background:#f3f2f1"></div>
  <div class="m t14" style="left:318px;top:249px;letter-spacing:0.080px">Not started</div>
  <svg class="abs" style="left:482px;top:257px" width="13" height="7" viewBox="0 0 13 7"><path d="M0.500 0.500 L6.500 6.200 L12.500 0.500" fill="none" stroke="#605e5c" stroke-width="1"/></svg>
  <div class="abs" style="left:534px;top:256px;width:6px;height:6px;border-radius:3px;background:#3b873a"></div>
  <div class="m t14" style="left:553px;top:249px;letter-spacing:0.030px">Medium</div>
  <svg class="abs" style="left:717px;top:257px" width="13" height="7" viewBox="0 0 13 7"><path d="M0.500 0.500 L6.500 6.200 L12.500 0.500" fill="none" stroke="#605e5c" stroke-width="1"/></svg>

  <div class="m l12" style="left:53px;top:283px;letter-spacing:-0.140px">Start date</div>
  <div class="m l12" style="left:288px;top:283px;letter-spacing:-0.140px">Due date</div>
  <div class="fld" style="left:53px;top:303px;width:215px;height:32px"></div>
  <div class="fld" style="left:288px;top:303px;width:214px;height:32px"></div>
  <div class="m t14" style="left:61px;top:309px;color:#a19f9d;letter-spacing:-0.100px">Start anytime</div>
  <div class="m t14" style="left:296px;top:309px;color:#a19f9d;letter-spacing:-0.100px">Due anytime</div>
  <svg class="abs" style="left:243px;top:311px" width="16" height="15" viewBox="0 0 16 15"><rect x="0.500" y="1.500" width="15" height="13" fill="none" stroke="#605e5c" stroke-width="1"/><path d="M0.500 4.500 H15.500 M4 0 V3 M12 0 V3" stroke="#605e5c" stroke-width="1"/><path d="M3 7 H13 M3 9.500 H13 M3 12 H13" stroke="#605e5c" stroke-width="1.100" stroke-dasharray="1.400 1.460"/></svg>
  <svg class="abs" style="left:477px;top:311px" width="16" height="15" viewBox="0 0 16 15"><rect x="0.500" y="1.500" width="15" height="13" fill="none" stroke="#605e5c" stroke-width="1"/><path d="M0.500 4.500 H15.500 M4 0 V3 M12 0 V3" stroke="#605e5c" stroke-width="1"/><path d="M3 7 H13 M3 9.500 H13 M3 12 H13" stroke="#605e5c" stroke-width="1.100" stroke-dasharray="1.400 1.460"/></svg>

  <div class="m l12" style="left:53px;top:351px;letter-spacing:-0.070px">Notes</div>
  <div class="abs" style="left:641px;top:352px;width:16px;height:16px;border-radius:3px;background:#6264a7"></div>
  <svg class="abs" style="left:641px;top:352px" width="16" height="16" viewBox="0 0 16 16"><path d="M3.600 8.300 L6.600 11.200 L12.400 4.800" fill="none" stroke="#fff" stroke-width="1.300"/></svg>
  <div class="m l12" style="left:665px;top:353px;color:#484644;letter-spacing:-0.160px">Show on card</div>
  <div class="fld" style="left:53px;top:375px;width:684px;height:62px"></div>
  <div class="m t14" style="left:61px;top:380px;letter-spacing:0.017px">Download Sprint Burndown Chart spreadsheet to update burn down (and burn up chart)</div>

  <div class="m l12" style="left:53px;top:465px;letter-spacing:-0.160px">Checklist 0 / 1</div>
  <div class="abs" style="left:641px;top:464px;width:16px;height:16px;border-radius:3px;border:1px solid #484644;background:#fff"></div>
  <div class="m l12" style="left:665px;top:465px;color:#484644;letter-spacing:-0.160px">Show on card</div>
  <div class="circ" style="left:53px;top:494px;width:16px;height:16px;border-color:#484644;border-width:1.100px"></div>
  <div class="m t14" style="left:76px;top:492px;letter-spacing:0.060px">www.mark-whitfield.com</div>
  <div class="circ" style="left:53px;top:524px;width:16px;height:16px;border-color:#484644;border-width:1.100px"></div>
  <div class="m t14" style="left:76px;top:522px;color:#605e5c;letter-spacing:0.030px">Add an item</div>

  <div class="m l12" style="left:53px;top:573px;letter-spacing:-0.060px">Attachments</div>
  <div class="abs" style="left:53px;top:593px;width:145px;height:35px;border:1px solid #e1dfdd;border-radius:3px;background:#fff;box-shadow:0 1.500px 3px rgba(0,0,0,.1)"></div>
  <div class="m t14 sb" style="left:74px;top:601px;color:#252423;letter-spacing:0.280px">Add attachment</div>

  <div class="m t14 sb" style="left:53px;top:673px;color:#252423;letter-spacing:0.040px">Comments</div>
  <div class="abs" style="left:53px;top:697px;width:684px;height:62px;background:#f3f2f1;border-radius:3px 3px 2px 2px;border-bottom:2px solid #5558af"></div>
  <div class="m t14" style="left:61px;top:702px;color:#484644;letter-spacing:-0.240px">Add updates here and hit send BELOW...</div>
  <div class="abs" style="left:660px;top:771px;width:77px;height:32px;border:1px solid #e1dfdd;border-radius:3px;background:#fff;box-shadow:0 1.500px 3px rgba(0,0,0,.1)"></div>
  <div class="m sb" style="left:660px;top:779px;width:77px;text-align:center;font-size:12.500px;line-height:18px;color:#252423;letter-spacing:-0.400px">Send</div>

  <div class="av s28" style="left:53px;top:838px"><svg viewBox="0 0 32 32"><g><rect x="-2" y="-2" width="36" height="36" fill="#b8b5af"/><rect x="-2" y="-2" width="9" height="36" fill="#a9a7a3"/><rect x="27" y="-2" width="7" height="36" fill="#aaa7a3"/><ellipse cx="15.500" cy="9.500" rx="8.800" ry="9" fill="#a59f9c"/><ellipse cx="15.500" cy="2.200" rx="5.500" ry="1.600" fill="#5f5856"/><ellipse cx="15.300" cy="16" rx="8" ry="13.400" fill="#d9b5b0"/><ellipse cx="15.300" cy="7.500" rx="6.200" ry="4.300" fill="#e1c6c3"/><ellipse cx="11.200" cy="17" rx="2.200" ry="2" fill="#d3a3a0"/><ellipse cx="19.900" cy="17" rx="2.200" ry="2" fill="#d09d9b"/><rect x="7.600" y="11.600" width="16.400" height="1.200" rx="0.500" fill="#33272c"/><ellipse cx="11.500" cy="13" rx="2.600" ry="1" fill="#947a7c"/><ellipse cx="19.600" cy="13" rx="2.600" ry="1" fill="#947a7c"/><ellipse cx="15.500" cy="19.900" rx="3.400" ry="0.800" fill="#b58a87"/><ellipse cx="15.500" cy="22.300" rx="4" ry="1.200" fill="#cba4a0"/><path d="M8.400 25.800 L11.500 25 L14.800 31.500 L16.600 31.500 L19.600 27 L20.800 28 L20 33 L10 33 Z" fill="#e3e5f6"/><path d="M11.800 25.500 L19 25.500 L15.600 30.500 Z" fill="#cfa6a1"/><path d="M3 27 L8.400 25.400 L11.500 33 L3 33 Z" fill="#1c2133"/><path d="M20.600 27.600 L24.800 28.400 L26 33 L19.400 33 Z" fill="#1c2133"/></g></svg></div>
  <div class="m l12" style="left:91px;top:845px;letter-spacing:0.110px">Whitfield, Mark</div>
  <div class="m l12" style="left:537px;top:845px;width:200px;text-align:right;letter-spacing:-0.220px">January 28, 2021 11:12 AM</div>
  <div class="abs" style="left:790px;top:0;width:10px;height:789px;border-radius:5px;background:#c8c6c4"></div>
</div></div>
<div id="blackbar"></div>
</body>
</html>
